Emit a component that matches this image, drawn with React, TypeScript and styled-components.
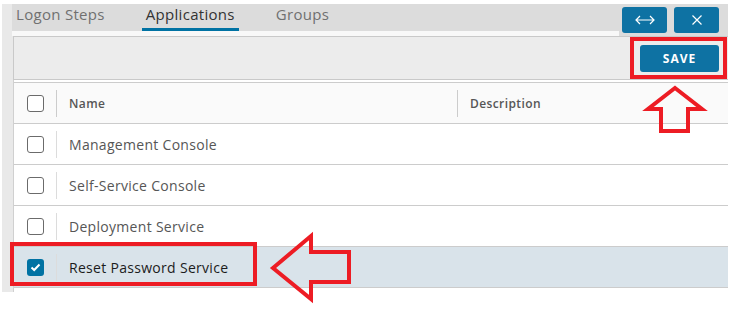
import React from "react";
import styled, { createGlobalStyle } from "styled-components";

const GlobalStyle = createGlobalStyle`
  html, body {
    margin: 0;
    padding: 0;
    background: #ffffff;
  }
  body {
    font-family: "Open Sans", "Liberation Sans", sans-serif;
  }
`

const Page = styled.div`
    position: relative;
    width: 742px;
    height: 311px;
    padding: 4px 0 0 2px;
    box-sizing: border-box;
`

const Panel = styled.div`
    width: 726px;
    height: 288px;
    background: #e9e9e9;
    padding-left: 10px;
    box-sizing: border-box;
    display: flex;
    flex-direction: column;
    overflow: hidden;
`

const TopBar = styled.div`
    display: flex;
    background: #dcdcdc;
`

const TabList = styled.div`
    flex: 1;
    display: flex;
    gap: 33px;
    height: 27px;
    border-bottom: 5px solid #f8f8f8;
`

const Tab = styled.div<{ $active?: boolean }>`
    padding: 0 4px 2px;
    height: 22px;
    line-height: 20px;
    font-size: 15px;
    letter-spacing: 0.3px;
    color: ${p => (p.$active ? "#333333" : "#707070")};
    border-bottom: 3px solid ${p => (p.$active ? "#0072a3" : "transparent")};
`

const Actions = styled.div`
    display: flex;
    gap: 7px;
    padding: 3px 9px 0 3px;
`

const IconBtn = styled.button`
    width: 45px;
    height: 26px;
    border: none;
    border-radius: 3px;
    background: #0e72a3;
    display: flex;
    align-items: center;
    justify-content: center;
    padding: 0;
`

const Toolbar = styled.div`
    height: 42px;
    margin-left: 1px;
    background: #ececec;
    border: 1px solid #c9c9c9;
    border-right: none;
    display: flex;
    align-items: center;
    justify-content: flex-end;
    padding-right: 9px;
`

const SaveBtn = styled.button`
    width: 79px;
    height: 27px;
    border: none;
    border-radius: 3px;
    background: #0e72a3;
    color: #ffffff;
    font-family: "Open Sans", "Liberation Sans", sans-serif;
    font-weight: 700;
    font-size: 12px;
    letter-spacing: 1px;
    padding: 0;
`

const Table = styled.div`
    flex: 1;
    margin-left: 1px;
    background: #ffffff;
    border-left: 1px solid #d0d0d0;
    padding-top: 2px;
`

const Row = styled.div<{ $head?: boolean; $selected?: boolean }>`
    display: grid;
    grid-template-columns: 42px 401px 1fr;
    height: 40px;
    border-bottom: 1px solid #cccccc;
    border-top: ${p => (p.$head ? "1px solid #cccccc" : "none")};
    background: ${p => (p.$head ? "#fafafa" : p.$selected ? "#d9e3ea" : "#ffffff")};
`

const Cell = styled.div`
    display: flex;
    align-items: center;
`

const CheckCell = styled(Cell)`
    padding-left: 13px;
`

const Divider = styled.span<{ $short?: boolean }>`
    width: 1px;
    height: 27px;
    background: ${p => (p.$short ? "#dcdcdc" : "#cccccc")};
`

const HeadText = styled.span`
    margin-left: 12px;
    font-size: 12px;
    font-weight: 600;
    letter-spacing: 0.4px;
    color: #565656;
`

const CellText = styled.span<{ $selected?: boolean }>`
    margin-left: 12px;
    font-size: 14px;
    letter-spacing: 0.3px;
    color: ${p => (p.$selected ? "#1c1c1c" : "#565656")};
`

const Box = styled.span<{ $checked?: boolean }>`
    width: 17px;
    height: 17px;
    box-sizing: border-box;
    border-radius: 3px;
    border: ${p => (p.$checked ? "none" : "1px solid #6b6b6b")};
    background: ${p => (p.$checked ? "#0072a3" : "#ffffff")};
    display: flex;
    align-items: center;
    justify-content: center;
`

const Overlay = styled.svg`
    position: absolute;
    left: 0;
    top: 0;
    pointer-events: none;
`

const apps = [
    "Management Console",
    "Self-Service Console",
    "Deployment Service",
    "Reset Password Service",
]

const Checkbox: React.FC<{ checked?: boolean }> = ({ checked }) => (
    <Box $checked={checked}>
        {checked && (
            <svg width="11" height="9" viewBox="0 0 11 9">
                <polyline points="1.5,4.5 4.2,7 9.5,1.5" fill="none" stroke="#fff" strokeWidth="2" />
            </svg>
        )}
    </Box>
)

export default function App() {
    return (
        <>
            <GlobalStyle />
            <Page>
                <Panel>
                    <TopBar>
                        <TabList>
                            <Tab>Logon Steps</Tab>
                            <Tab $active>Applications</Tab>
                            <Tab>Groups</Tab>
                        </TabList>
                        <Actions>
                            <IconBtn>
                                <svg width="20" height="10" viewBox="0 0 20 10">
                                    <path d="M1 5 H19 M5 1 L1 5 L5 9 M15 1 L19 5 L15 9" fill="none" stroke="#fff" strokeWidth="1.2" />
                                </svg>
                            </IconBtn>
                            <IconBtn>
                                <svg width="10" height="10" viewBox="0 0 10 10">
                                    <path d="M0.5 0.5 L9.5 9.5 M9.5 0.5 L0.5 9.5" fill="none" stroke="#fff" strokeWidth="1.2" />
                                </svg>
                            </IconBtn>
                        </Actions>
                    </TopBar>
                    <Toolbar>
                        <SaveBtn>SAVE</SaveBtn>
                    </Toolbar>
                    <Table>
                        <Row $head>
                            <CheckCell><Checkbox /></CheckCell>
                            <Cell><Divider /><HeadText>Name</HeadText></Cell>
                            <Cell><Divider /><HeadText>Description</HeadText></Cell>
                        </Row>
                        {apps.map((name, i) => {
                            const selected = i === apps.length - 1
                            return (
                                <Row key={name} $selected={selected}>
                                    <CheckCell><Checkbox checked={selected} /></CheckCell>
                                    <Cell><Divider $short /><CellText $selected={selected}>{name}</CellText></Cell>
                                    <Cell />
                                </Row>
                            )
                        })}
                    </Table>
                </Panel>
                <Overlay width="742" height="311" viewBox="0 0 742 311">
                    <g fill="none" stroke="#ed1c24" strokeWidth="4">
                        <rect x="632" y="39" width="93" height="38" />
                        <rect x="12" y="244" width="243" height="40" />
                        <polygon points="675,88 702,109 688,109 688,131 661,131 661,109 648,109" />
                        <polygon points="273,268 311,236 311,252 349,252 349,282 311,282 311,299" />
                    </g>
                </Overlay>
            </Page>
        </>
    )
}
